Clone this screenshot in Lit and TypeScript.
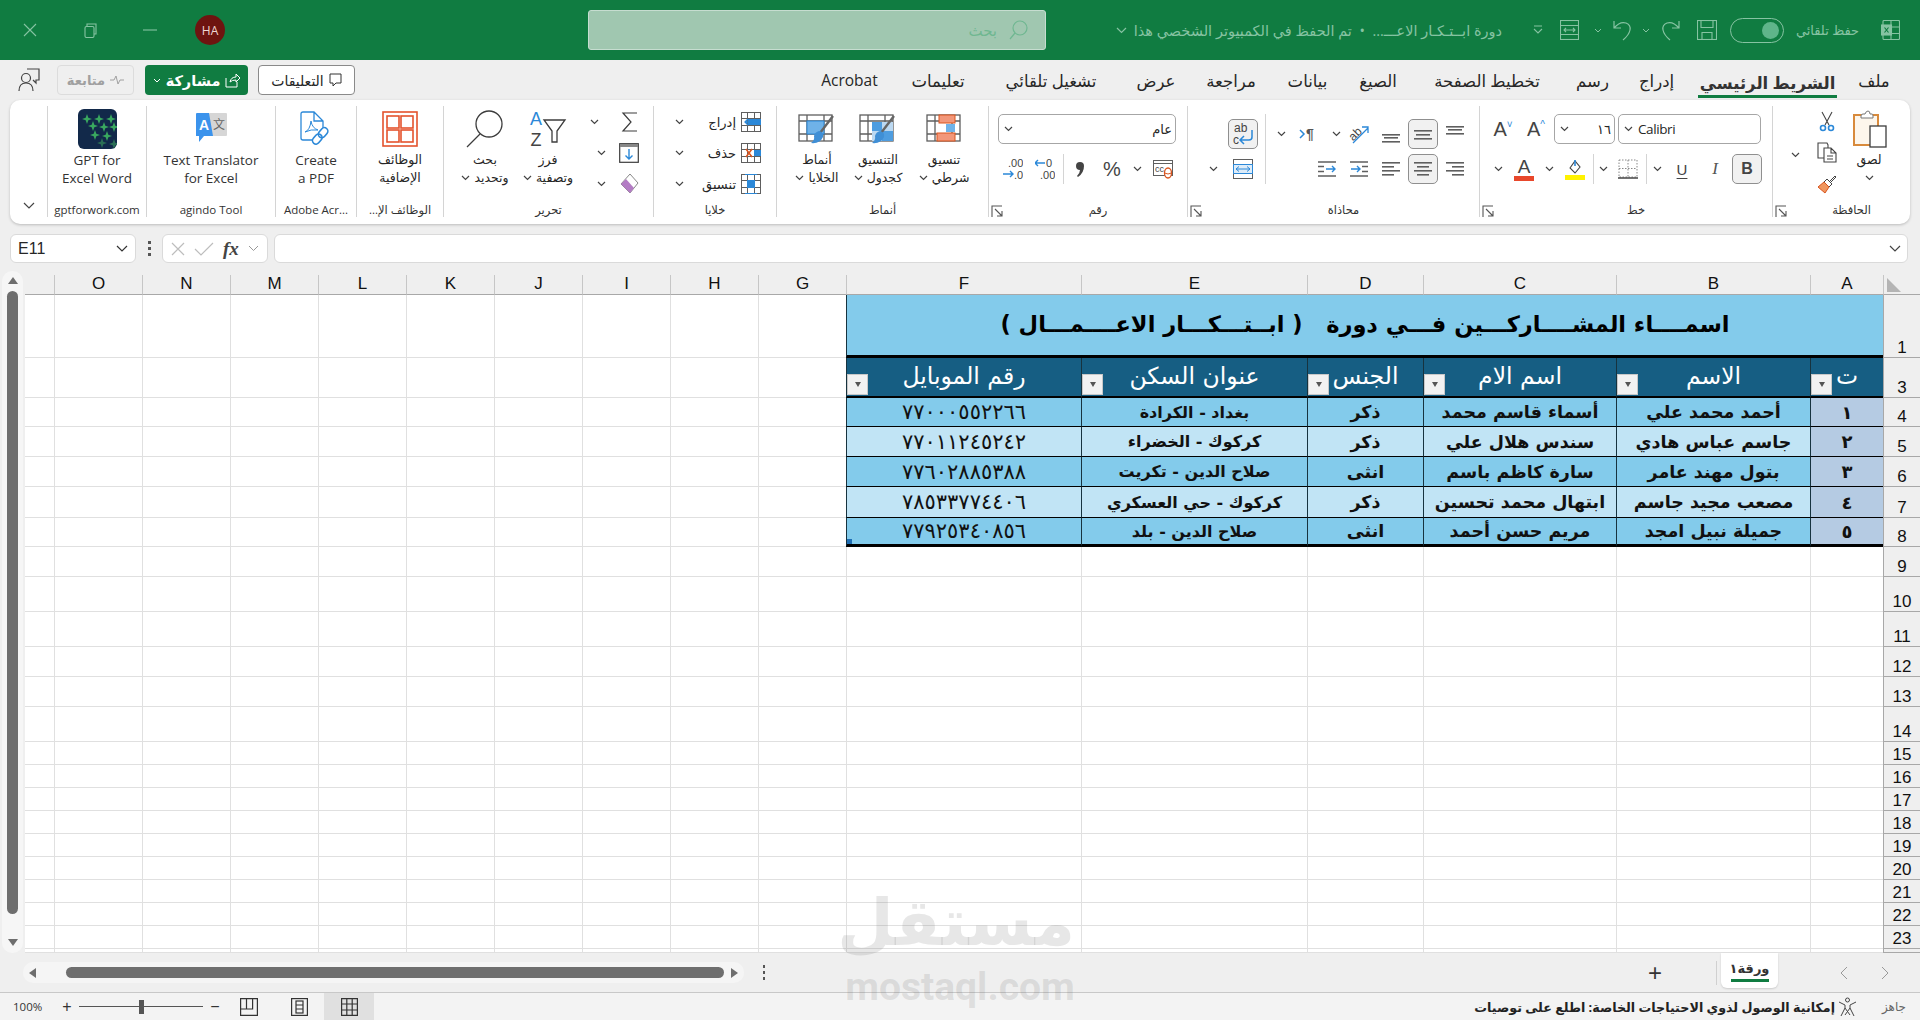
import {LitElement, html, svg, css} from 'lit';
import {customElement} from 'lit/decorators.js';

const G = '#5f5f5f';
const D = '#3c3c3c';
const B = '#2b88d8';
const O = '#d9541e';

const chev = html`<svg width="9" height="6" viewBox="0 0 9 6"><path d="M1 1l3.5 3.5L8 1" fill="none" stroke="#444" stroke-width="1.2"/></svg>`;
const launcher = html`<svg width="12" height="12" viewBox="0 0 12 12"><path d="M1 12V1h10M4 4l7 7M11 6v5H6" fill="none" stroke="#555" stroke-width="1.1"/></svg>`;

const lines = (rows: number[][], w = 20) => html`<svg width="${w}" height="18" viewBox="0 0 ${w} 18">${rows.map(r => svg`<rect x="${r[0]}" y="${r[1]}" width="${r[2]}" height="1.6" fill="${G}"/>`)}</svg>`;

// four pointed stars of the GPT add-in logo
const STAR_POS = [[9, 10], [21, 10], [33, 10], [15, 17], [26, 18], [36, 18], [17, 26], [29, 27], [24, 34], [36, 35]];
const stars = STAR_POS.map(([x, y], i) => svg`<path d="M${x} ${y - 5}l1.300 3.700 3.700 1.300-3.700 1.300-1.300 3.700-1.300-3.700-3.700-1.300 3.700-1.300z" fill="${i > 7 ? '#2b6f55' : '#39a85f'}"/>`);
const gptIcon = html`<svg width="39" height="40" viewBox="0 0 39 40"><rect width="39" height="40" rx="6" fill="#12294a"/>${stars}</svg>`;

const translateIcon = html`<svg width="32" height="33" viewBox="0 0 32 33"><rect x="14" y="1" width="18" height="23" rx="1" fill="#d6d6d6"/><path d="M1 2q0-1 1-1h12l4 23H9l-5 6v-6H1z" fill="#3b93ec"/><text x="9" y="18" text-anchor="middle" font-family="Liberation Sans" font-weight="700" font-size="14" fill="#fff">A</text><text x="24" y="17" text-anchor="middle" font-family="Noto Sans CJK SC" font-size="12" fill="#666">文</text></svg>`;

const pdfIcon = html`<svg width="32" height="36" viewBox="0 0 32 36"><path d="M1 3q0-2 2-2h11l9 9v7M14 1v9h9M1 3v24q0 2 2 2h10" fill="none" stroke="#2b88d8" stroke-width="1.300"/><path d="M5 21q5-2 6-11 1 7 7 9-7-1-13 2z" fill="none" stroke="#2b88d8" stroke-width="1"/><g fill="none" stroke="#2b88d8" stroke-width="1.600"><rect x="20" y="16" width="7" height="11" rx="3.500" transform="rotate(40 23 21)"/><rect x="14" y="23" width="7" height="11" rx="3.500" transform="rotate(40 18 28)"/></g></svg>`;

const addinIcon = html`<svg width="36" height="36" viewBox="0 0 36 36" fill="none" stroke="#e4532d" stroke-width="1.6"><rect x="1" y="1" width="34" height="34"/><rect x="5" y="5" width="12" height="12"/><rect x="19" y="5" width="12" height="12"/><rect x="5" y="19" width="12" height="12"/><rect x="19" y="19" width="12" height="12"/></svg>`;

const findIcon = html`<svg width="38" height="38" viewBox="0 0 38 38" fill="none" stroke="${D}" stroke-width="1.3"><circle cx="23" cy="14" r="13"/><path d="M14 24L1 37"/></svg>`;

const sortIcon = html`<svg width="38" height="38" viewBox="0 0 38 38"><text x="7" y="15" text-anchor="middle" font-family="Liberation Sans" font-size="18" fill="${B}">A</text><text x="7" y="36" text-anchor="middle" font-family="Liberation Sans" font-size="18" fill="#444">Z</text><path d="M15 10h21l-8 11v11h-5V21z" fill="none" stroke="${D}" stroke-width="1.3"/></svg>`;

const sumIcon = html`<svg width="18" height="20" viewBox="0 0 18 20"><path d="M16 1H2l8 9-8 9h14" fill="none" stroke="${D}" stroke-width="1.2"/></svg>`;
const fillDown = html`<svg width="20" height="20" viewBox="0 0 20 20"><rect x=".7" y=".7" width="18.6" height="18.6" fill="none" stroke="${D}" stroke-width="1.2"/><path d="M1 1h18v3H1z" fill="#888"/><path d="M10 6v10M6.5 12.5L10 16l3.5-3.5" fill="none" stroke="${B}" stroke-width="1.4"/></svg>`;
const eraser = html`<svg width="20" height="22" viewBox="0 0 20 22"><path d="M11 1l8 9-8 10-9-9z" fill="#fff" stroke="#888"/><path d="M2 11l5-5 8 9-4 5z" fill="#b37cc4"/></svg>`;

const sheetCell = (mark: any) => html`<svg width="20" height="20" viewBox="0 0 20 20"><g fill="none" stroke="${G}" stroke-width="1"><rect x=".5" y=".5" width="19" height="19"/><path d="M.5 6.5h19M.5 13.5h19M6.5.5v19M13.5.5v19"/></g>${mark}</svg>`;
const insIcon = sheetCell(svg`<rect x="7" y="7" width="13" height="6" fill="${B}"/><path d="M12 10H4M7 7l-3 3 3 3" fill="none" stroke="${B}" stroke-width="1.3"/>`);
const delIcon = sheetCell(svg`<rect x="13" y="7" width="7" height="6" fill="${B}"/><path d="M5 6l6 8M11 6l-6 8" stroke="${O}" stroke-width="1.5"/>`);
const fmtIcon = sheetCell(svg`<rect x="6" y="6" width="8" height="8" fill="${B}"/><path d="M4 .5h12M4 19.5h12" stroke="${B}" stroke-width="1"/>`);

const brush = svg`<path d="M35 2L22 19" stroke="#666" stroke-width="2.4"/><path d="M21 17q5 1 4 6-3 7-12 6 4-3 3-7 1-4 5-5z" fill="#3f8fd6"/>`;
const bigGrid = svg`<g fill="none" stroke="${G}" stroke-width="1.3"><rect x="1" y="1" width="33" height="26"/><path d="M1 7h33M1 20h33M9 1v26M26 1v26"/></g>`;
const cellStyle = html`<svg width="38" height="30" viewBox="0 0 38 30">${bigGrid}<rect x="9" y="7" width="17" height="13" fill="#6fb2e8" stroke="${B}"/>${brush}</svg>`;
const tableFmt = html`<svg width="38" height="30" viewBox="0 0 38 30">${bigGrid}<rect x="13" y="8" width="21" height="19" fill="#bcd9f2"/><rect x="13" y="8" width="10" height="9" fill="#4e9de0"/><rect x="23" y="17" width="11" height="10" fill="#4e9de0"/>${brush}</svg>`;
const condFmt = html`<svg width="36" height="30" viewBox="0 0 36 30">${bigGrid}<rect x="13" y="1" width="16" height="8" fill="#f2977a" stroke="${O}"/><rect x="20" y="10" width="9" height="8" fill="#6fb2e8"/><rect x="11" y="19" width="18" height="8" fill="#f2977a" stroke="${O}"/></svg>`;

const pasteIcon = html`<svg width="36" height="38" viewBox="0 0 36 38"><path d="M3 5h24v30H3z" fill="#fdf6ec" stroke="#d88a3c" stroke-width="2"/><path d="M10 6q0-2 2-2h2q1-3 3-3t2 3h2q1 0 1 2v2H10z" fill="#fff" stroke="#777"/><rect x="19" y="16" width="16" height="21" fill="#fff" stroke="${D}" stroke-width="1.3"/></svg>`;
const cutIcon = html`<svg width="16" height="21" viewBox="0 0 16 21"><path d="M3 1l7 13M13 1L6 14" fill="none" stroke="#444" stroke-width="1.1"/><circle cx="4" cy="17" r="2.5" fill="none" stroke="${B}" stroke-width="1.6"/><circle cx="12" cy="17" r="2.5" fill="none" stroke="${B}" stroke-width="1.6"/></svg>`;
const copyIcon = html`<svg width="20" height="21" viewBox="0 0 20 21" fill="#fff" stroke="#444" stroke-width="1.1"><path d="M1 1h9l1 2v13H1z"/><path d="M7 6h7l5 5v9H7zM14 6v5h5M10 14h6M10 17h6"/></svg>`;
const painterIcon = html`<svg width="20" height="20" viewBox="0 0 20 20"><path d="M12 8l6-6 1 1-6 6z" fill="none" stroke="#444"/><path d="M10 5l5 5-3 3-5-5z" fill="#fff" stroke="#444"/><path d="M7 8l5 5-4 6-7-6z" fill="#f0975f" stroke="${O}"/></svg>`;

const fontUp = html`<span class="fa">A<sup>^</sup></span>`;
const fontDown = html`<span class="fa">A<sup class="bl">˅</sup></span>`;
const fontColor = html`<span class="sw"><i>A</i><b class="red"></b></span>`;
const fillColor = html`<span class="sw"><svg width="18" height="15" viewBox="0 0 18 15"><path d="M4 9l5-7 5 6-5 6z" fill="none" stroke="#444" stroke-width="1.1"/><path d="M9 1v6" stroke="${B}" stroke-width="1.6"/></svg><b class="yel"></b></span>`;
const bordersIcon = html`<svg width="20" height="20" viewBox="0 0 20 20"><path d="M1 1h18v17H1zM10 1v17M1 9.5h18" fill="none" stroke="#888" stroke-width="1" stroke-dasharray="1.5 1.5"/><path d="M0 19h20" stroke="#444" stroke-width="1.5"/></svg>`;
const wrapIcon = html`<svg width="22" height="24" viewBox="0 0 22 24"><text x="2" y="10" font-family="Liberation Sans" font-size="12" fill="#444">ab</text><text x="1" y="22" font-family="Liberation Sans" font-size="12" fill="#444">c</text><path d="M20 8v7q0 3-3 3H9M12 14l-4 4 4 4" fill="none" stroke="${B}" stroke-width="1.5"/></svg>`;
const mergeIcon = html`<svg width="20" height="20" viewBox="0 0 20 20"><rect x=".5" y=".5" width="19" height="19" fill="#fff" stroke="${G}"/><path d="M.5 5.5h19v9H.5z" fill="#ddecf9" stroke="${B}"/><path d="M3 10h14M6 7.5L3 10l3 2.500M14 7.500l3 2.500-3 2.500" fill="none" stroke="${B}"/></svg>`;
const orientIcon = html`<svg width="22" height="22" viewBox="0 0 22 22"><text x="0" y="14" transform="rotate(-45 8 10)" font-family="Liberation Sans" font-size="12" fill="#444">ab</text><path d="M5 20L20 5M14 4h6v6" fill="none" stroke="${B}" stroke-width="1.3"/></svg>`;
const paraIcon = html`<svg width="20" height="14" viewBox="0 0 20 14"><path d="M1 3l4 4-4 4" fill="none" stroke="${B}" stroke-width="1.5"/><text x="7" y="12" font-family="Liberation Sans" font-weight="700" font-size="14" fill="#555">¶</text></svg>`;
const indentIcon = (flip: boolean) => html`<svg width="18" height="18" viewBox="0 0 18 18"><path d="M0 2h18M0 16h18M${flip ? '0 6.500h6M0 11.500h6' : '12 6.500h6M12 11.500h6'}" stroke="${G}" stroke-width="1.6"/><path d="M${flip ? '8 9h9M14 6l3 3-3 3' : '1 9h9M7 6l3 3-3 3'}" fill="none" stroke="${B}" stroke-width="1.400"/></svg>`;
const moneyIcon = html`<svg width="20" height="20" viewBox="0 0 20 20"><rect x=".5" y="1.500" width="19" height="15" fill="none" stroke="${G}"/><path d="M.5 4.500h19" stroke="${G}"/><text x="2" y="13" font-family="Liberation Sans" font-size="9" fill="#444">cc</text><ellipse cx="15" cy="14" rx="3.500" ry="5" fill="#fff" stroke="${O}" stroke-width="1.300"/><path d="M11.500 14q3.500 2 7 0" fill="none" stroke="${O}"/></svg>`;
const decIcon = (inc: boolean) => html`<svg width="20" height="24" viewBox="0 0 20 24"><text x="${inc ? 5 : 11}" y="10" font-family="Liberation Sans" font-size="11" fill="#444">${inc ? '.00' : '0'}</text><text x="${inc ? 11 : 5}" y="22" font-family="Liberation Sans" font-size="11" fill="#444">${inc ? '.0' : '.00'}</text><path d="${inc ? 'M0 17h10M7 14l3 3-3 3' : 'M10 6H0M3 3L0 6l3 3'}" fill="none" stroke="${B}" stroke-width="1.400"/></svg>`;
const commaIcon = html`<svg width="10" height="17" viewBox="0 0 10 17"><path d="M5 1a4 4 0 0 1 4 4q0 7-6 11l-1-1q3-3 3-6a4 4 0 0 1 0-8z" fill="#444"/></svg>`;

const dim = '#86c3a2';
const tbChev = html`<svg width="8" height="5" viewBox="0 0 8 5"><path d="M1 1l3 3 3-3" fill="none" stroke="${dim}"/></svg>`;
const tbIcons = {
  close: html`<svg width="14" height="14" viewBox="0 0 14 14"><path d="M1 1l12 12M13 1L1 13" stroke="${dim}" stroke-width="1.1"/></svg>`,
  restore: html`<svg width="13" height="15" viewBox="0 0 13 15" fill="none" stroke="${dim}" stroke-width="1.100"><path d="M3 3V1h9v10h-2"/><rect x="1" y="3.500" width="9" height="11" rx="1.500"/></svg>`,
  min: html`<svg width="14" height="2" viewBox="0 0 14 2"><path d="M0 1h14" stroke="${dim}" stroke-width="1.100"/></svg>`,
  custom: html`<svg width="10" height="10" viewBox="0 0 10 10" fill="none" stroke="${dim}" stroke-width="1.100"><path d="M1 1h8M1 4l4 4 4-4"/></svg>`,
  table: html`<svg width="19" height="20" viewBox="0 0 19 20" fill="none" stroke="${dim}" stroke-width="1.100"><rect x=".5" y=".5" width="18" height="19"/><path d="M.5 5.500h18M.5 14.500h18M4 10h11M6 8l-2 2 2 2M13 8l2 2-2 2"/></svg>`,
  undo: html`<svg width="19" height="21" viewBox="0 0 19 21" fill="none" stroke="${dim}" stroke-width="1.200"><path d="M1 1v7h7M1 8q6-7 12-5 5 2 4 7-1 5-7 10"/></svg>`,
  redo: html`<svg width="19" height="21" viewBox="0 0 19 21" fill="none" stroke="${dim}" stroke-width="1.200"><path d="M18 1v7h-7M18 8q-6-7-12-5-5 2-4 7 1 5 7 10"/></svg>`,
  save: html`<svg width="20" height="20" viewBox="0 0 20 20" fill="none" stroke="${dim}" stroke-width="1.100"><rect x=".5" y=".5" width="19" height="19"/><path d="M4 .5v7h12v-7M5 19.500v-7h10v7"/></svg>`,
  excel: html`<svg width="19" height="20" viewBox="0 0 19 20" fill="none" stroke="${dim}" stroke-width="1.100"><rect x="2" y=".5" width="16.500" height="19" rx="1"/><path d="M10 .5v19M2 7h16.500M2 13.500h16.500"/><rect x=".5" y="5" width="10" height="10" fill="${dim}"/><path d="M3.500 7.500l4 5M7.500 7.500l-4 5" stroke="#107c41" stroke-width="1.200"/></svg>`,
  search: html`<svg width="19" height="20" viewBox="0 0 19 20" fill="none" stroke="#6fb791" stroke-width="1.200"><circle cx="11" cy="8" r="7"/><path d="M6 13l-5 6"/></svg>`,
};

const COLS = ['', 'O', 'N', 'M', 'L', 'K', 'J', 'I', 'H', 'G', 'F', 'E', 'D', 'C', 'B', 'A'];
const ROW_NUMS = [1, 3, 4, 5, 6, 7, 8, 9, 10, 11, 12, 13, 14, 15, 16, 17, 18, 19, 20, 21, 22, 23];
const HEADERS = ['رقم الموبايل', 'عنوان السكن', 'الجنس', 'اسم الام', 'الاسم', 'ت'];
const PEOPLE = [
  ['٧٧٠٠٠٥٥٢٢٦٦', 'بغداد - الكرادة', 'ذكر', 'أسماء قاسم محمد', 'أحمد محمد علي', '١'],
  ['٧٧٠١١٢٤٥٢٤٢', 'كركوك - الخضراء', 'ذكر', 'سندس هلال علي', 'جاسم عباس هادي', '٢'],
  ['٧٧٦٠٢٨٨٥٣٨٨', 'صلاح الدين - تكريت', 'انثى', 'سارة كاظم باسم', 'بتول مهند عامر', '٣'],
  ['٧٨٥٣٣٧٧٤٤٠٦', 'كركوك - حي العسكري', 'ذكر', 'ابتهال محمد تحسين', 'مصعب مجيد جاسم', '٤'],
  ['٧٧٩٢٥٣٤٠٨٥٦', 'صلاح الدين - بلد', 'انثى', 'مريم حسن أحمد', 'جميلة نبيل امجد', '٥'],
];
const TABS = ['Acrobat', 'تعليمات', 'تشغيل تلقائي', 'عرض', 'مراجعة', 'بيانات', 'الصيغ', 'تخطيط الصفحة', 'رسم', 'إدراج', 'الشريط الرئيسي', 'ملف'];

@customElement('app-root')
export class AppRoot extends LitElement {
  static styles = css`
    :host {
      display: block;
      width: 1920px;
      height: 1020px;
      position: relative;
      overflow: hidden;
      background: #efefef;
      font-family: "Open Sans", "DejaVu Sans", sans-serif;
      color: #262626;
    }
    .ar { direction: rtl; }
    svg { display: block; flex: none; }
    .c { display: flex; align-items: center; justify-content: center; min-width: 0; }

    /* title bar */
    .title {
      height: 60px;
      background: #107c41;
      display: grid;
      grid-template-columns: 60px 60px 60px 60px 348px 458px 47px 409px 23px 26px 37px 20px 28px 20px 28px 46px 55px 85px 40px 10px;
      align-items: center;
      color: #86c3a2;
    }
    .avatar {
      width: 30px; height: 30px; border-radius: 50%;
      background: #6e1410; color: #f0d8d4;
      font-size: 12px; display: flex; align-items: center; justify-content: center;
    }
    .search {
      height: 40px; box-sizing: border-box;
      background: #a0c7b0; border: 1px solid #c6ddd0; border-radius: 3px;
      display: flex; align-items: center; justify-content: flex-end; gap: 12px;
      padding-right: 17px; color: #6fb791; font-size: 15px;
    }
    .doc { font-size: 14.5px; display: flex; align-items: center; justify-content: flex-end; gap: 7px; white-space: nowrap; overflow: hidden; }
    .toggle {
      width: 54px; height: 25px; box-sizing: border-box;
      border: 1px solid #86c3a2; border-radius: 13px;
      display: flex; align-items: center; justify-content: flex-end; padding-right: 4px;
    }
    .toggle i { width: 17px; height: 17px; border-radius: 50%; background: #5fb58a; }
    .autosave { font-size: 13px; white-space: nowrap; }

    /* tab row */
    .tabrow { height: 40px; display: flex; align-items: center; }
    .lefttools { width: 800px; display: flex; align-items: center; padding-left: 18px; box-sizing: border-box; }
    .pill {
      height: 30px; box-sizing: border-box; border-radius: 4px;
      display: flex; align-items: center; justify-content: center; gap: 5px; white-space: nowrap;
    }
    .follow { width: 77px; margin-left: 17px; border: 1px solid #dcdcdc; color: #a0a0a0; font-size: 13px; font-weight: 700; }
    .share { width: 103px; margin-left: 11px; background: #107c41; color: #fff; font-weight: 700; font-size: 14.5px; }
    .comments { width: 97px; margin-left: 10px; background: #fff; border: 1px solid #8a8a8a; font-size: 14px; }
    .tabs {
      width: 1112px; display: grid; height: 40px; align-items: center; justify-items: center;
      grid-template-columns: 99px 78px 148px 62px 88px 65px 76px 142px 69px 59px 163px 50px;
      font-size: 16.5px; white-space: nowrap;
    }
    .tabs .on {
      font-weight: 700; color: #333; font-size: 16.5px; padding: 3px 2px 1px;
      border-bottom: 3px solid #107c41; margin-top: 5px;
    }
    .tabs .latin { font-size: 15.5px; }

    /* ribbon */
    .ribbon {
      height: 124px; margin: 0 10px; box-sizing: border-box;
      background: #fff; border-radius: 10px;
      box-shadow: 0 1px 3px rgba(0,0,0,.22);
      display: grid;
      grid-template-columns: 37px 99px 129px 81px 87px 210px 123px 212px 199px 292px 293px 138px;
      padding: 6px 0 7px;
    }
    .collapse { display: flex; align-items: flex-end; justify-content: center; padding-bottom: 8px; }
    .grp { border-left: 1px solid #d4d4d4; display: flex; flex-direction: column; height: 111px; min-width: 0; }
    .body { height: 97px; display: flex; min-width: 0; }
    .bodystyles { padding-left: 8px; }
    .lab {
      height: 14px; font-size: 11.5px; line-height: 14px; color: #333; text-align: center;
      display: flex; white-space: nowrap;
    }
    .lab span { flex: 1; text-align: center; }
    .lab .l { width: 20px; flex: none; padding-left: 2px; padding-top: 2px; box-sizing: border-box; }
    .big { display: flex; flex-direction: column; align-items: center; min-width: 0; flex: 1; font-size: 12.5px; line-height: 18px; white-space: nowrap; }
    .big .ic { height: 45px; flex: none; display: flex; align-items: center; justify-content: center; }
    .big.en { font-size: 13.5px; color: #333; }
    .big .ln { display: flex; gap: 4px; align-items: center; justify-content: center; height: 18px; }
    .w82 { flex: none; width: 82px; }
    .w44 { flex: none; width: 44px; }
    .w64 { flex: none; width: 64px; }
    .w58 { flex: none; width: 58px; }
    .w74 { flex: none; width: 74px; }
    .w68 { flex: none; width: 68px; }
    .tri { display: grid; grid-template-rows: 31px 31px 31px; align-items: center; flex: none; }
    .editTri { width: 84px; }
    .editTri > div { display: flex; align-items: center; justify-content: flex-end; padding-right: 15px; gap: 13px; }
    .editTri .far { margin-right: 9px; }
    .cellsTri { width: 123px; font-size: 13px; }
    .cellsTri > div { display: grid; grid-template-columns: 16px 18px 51px 24px; align-items: center; justify-items: center; }
    .cellsTri span { justify-self: end; padding-right: 3px; white-space: nowrap; }
    .clipChev { width: 44px; align-self: center; display: flex; justify-content: center; }
    .clipTri { width: 18px; justify-items: center; }
    .stack { display: flex; flex-direction: column; gap: 10px; padding-top: 8px; width: 100%; }
    .r { display: grid; height: 30px; align-items: center; justify-items: center; }
    .btn { width: 30px; height: 30px; box-sizing: border-box; display: flex; align-items: center; justify-content: center; }
    .sel { background: #f1f1f1; border: 1px solid #8f8f8f; border-radius: 5px; }
    .sep { width: 1px; height: 30px; background: #d4d4d4; }
    .sep.tall { height: 40px; align-self: start; }
    .field {
      height: 30px; box-sizing: border-box; width: 100%;
      border: 1px solid #a6a6a6; border-radius: 5px; background: #fff;
      display: flex; align-items: center; gap: 5px; padding: 0 3px 0 5px; font-size: 13px;
    }
    .field .v { flex: 1; }
    .cal { font-family: "Open Sans", sans-serif; font-size: 13.5px; letter-spacing: -.4px; }
    .fa { font-family: "Liberation Sans", sans-serif; font-size: 20px; color: #444; position: relative; }
    .fa sup { font-size: 10px; color: #2b88d8; vertical-align: 8px; line-height: 0; }
    .sw { display: flex; flex-direction: column; align-items: center; width: 20px; }
    .sw i { font: normal 19px/17px "Liberation Sans", sans-serif; color: #444; }
    .sw b { width: 20px; height: 5px; display: block; margin-top: 1px; }
    .red { background: #e8472b; }
    .yel { background: #fff200; }
    .bi { font: 700 16px "Liberation Sans", sans-serif; color: #444; }
    .it { font: italic 17px "Liberation Serif", serif; color: #555; }
    .un { font: 15px "Liberation Sans", sans-serif; color: #444; text-decoration: underline; text-underline-offset: 3px; }
    .pct { font: 20px "Liberation Sans", sans-serif; color: #444; }
    .fontTop { grid-template-columns: 30px 30px 61px 143px; column-gap: 3px; padding-left: 8px; }
    .fontBot { grid-template-columns: 20px 32px 18px 34px 2px 18px 32px 4px 18px 32px 34px 30px; padding-left: 8px; }
    .alTop { grid-template-columns: 30px 14px 18px 37px 18px 28px 35px 30px 34px; padding-left: 40px; }
    .alBot { grid-template-columns: 18px 6px 30px 14px 37px 36px 28px 35px 30px 34px; padding-left: 16px; }
    .numTop { padding: 0 11px 0 9px; display: block; }
    .numBot { grid-template-columns: 30px 34px 2px 32px 32px 18px 34px; padding-left: 9px; }

    /* formula bar */
    .fbar { height: 51px; box-sizing: border-box; padding: 10px 12px 12px 10px; display: flex; align-items: stretch; }
    .fbox { background: #fff; border: 1px solid #dadada; border-radius: 6px; box-sizing: border-box; display: flex; align-items: center; }
    .namebox { width: 126px; padding: 0 7px 0 7px; justify-content: space-between; font: 16px "Liberation Sans", sans-serif; }
    .dots { width: 26px; display: flex; flex-direction: column; align-items: center; justify-content: center; gap: 3px; }
    .dots i { width: 3px; height: 3px; background: #555; }
    .fx { width: 106px; justify-content: space-around; padding: 0 4px; }
    .fx em { font: italic 700 19px "Liberation Serif", serif; color: #444; }
    .finput { flex: 1; margin-left: 6px; justify-content: flex-end; padding-right: 6px; }

    /* sheet */
    .sheet { height: 678px; display: flex; }
    .vs { width: 25px; box-sizing: border-box; padding: 0 2px 0 2px; display: flex; }
    .vtrack {
      flex: 1; background: #f6f6f6; border-radius: 10px; margin-top: -4px;
      display: flex; flex-direction: column; align-items: center;
    }
    .tup { width: 0; height: 0; border: 5px solid transparent; border-top: none; border-bottom: 7px solid #6e6e6e; margin-top: 6px; }
    .tdn { width: 0; height: 0; border: 5px solid transparent; border-bottom: none; border-top: 7px solid #6e6e6e; }
    .vthumb { width: 11px; height: 623px; background: #6e6e6e; border-radius: 6px; margin: 7px 0 25px; }

    .grid {
      flex: 1; display: grid; background: #fff;
      grid-template-columns: 29px repeat(9, 88px) 235px 226px 116px 193px 194px 73px 37px;
      grid-template-rows: 20px 63px 40px 29px 30px 30px 31px 29px 30px 35px 35px 30px 30px 35px repeat(9, 23px) 4px;
      font-family: "Liberation Sans", sans-serif;
    }
    .ch {
      background: #efefef; border-left: 1px solid #c6c6c6; border-bottom: 1px solid #a8a8a8;
      box-sizing: border-box; font-size: 17px; line-height: 18px; text-align: center; color: #111;
    }
    .ch.first { border-left: none; }
    .corner { background: #efefef; border-bottom: 1px solid #a8a8a8; border-left: 1px solid #c6c6c6; box-sizing: border-box; display: flex; align-items: center; padding-left: 3px; }
    .corner i { width: 0; height: 0; border-left: 0 solid transparent; border-right: 14px solid #b4b4b4; border-top: 14px solid transparent; transform: scaleX(-1); }
    .rh {
      background: #efefef; border-left: 1px solid #a8a8a8; border-bottom: 1px solid #a8a8a8;
      box-sizing: border-box; font-size: 17px; line-height: 19px;
      display: flex; align-items: flex-end; justify-content: center; color: #111;
    }
    .cell { border-left: 1px solid #e0e0e0; border-bottom: 1px solid #e0e0e0; box-sizing: border-box; }
    .cell.nol { border-left: none; }
    .tc {
      display: flex; align-items: center; justify-content: center; direction: rtl; white-space: nowrap;
      box-sizing: border-box; min-width: 0; position: relative;
      font-family: "DejaVu Sans", sans-serif; color: #111;
      border-left: 1px solid #17333f; border-bottom: 1px solid #000;
    }
    .titlecell {
      grid-column: 11 / 17; background: #83cbeb; font-weight: 700; font-size: 22.5px; color: #000;
      border-bottom: 3px solid #000; padding-bottom: 3px;
    }
    .hd { background: #165e83; color: #fff; font-size: 23.5px; border-bottom: 2px solid #000; padding-bottom: 2px; }
    .odd { background: #83cbeb; }
    .even { background: #c1e4f5; }
    .idx { background: #b5cbe3; font-size: 18px !important; }
    .dt { font-weight: 700; font-size: 17.5px; }
    .addr { font-size: 16px; }
    .num { font-size: 21px; font-weight: 400; letter-spacing: 0; }
    .last { border-bottom: 3px solid #000; }
    .flt {
      position: absolute; left: 0; bottom: 1px; width: 21px; height: 21px; box-sizing: border-box;
      background: #f2f2f2; border: 1px solid #c8c8c8; display: flex; align-items: center; justify-content: center;
    }
    .flt i { width: 0; height: 0; border: 3.5px solid transparent; border-bottom: none; border-top: 5px solid #555; }
    .handle { position: absolute; left: 0; bottom: 0; width: 5px; height: 5px; background: #1f6fb5; }

    /* sheet tabs */
    .strip { height: 40px; box-sizing: border-box; border-bottom: 1px solid #c8c8c8; display: flex; align-items: flex-start; }
    .hs {
      width: 721px; height: 21px; margin: 9px 0 0 23px; background: #f5f5f5; border-radius: 10px;
      display: flex; align-items: center; box-sizing: border-box; padding: 0 6px;
    }
    .hl { width: 0; height: 0; border: 5px solid transparent; border-left: none; border-right: 7px solid #6e6e6e; }
    .hr { width: 0; height: 0; border: 5px solid transparent; border-right: none; border-left: 7px solid #6e6e6e; }
    .hthumb { flex: 1; height: 11px; background: #6e6e6e; border-radius: 6px; margin: 0 7px 0 30px; }
    .vdots { height: 30px; flex-direction: column; gap: 3px; }
    .vdots i { width: 2px; height: 3px; background: #555; display: block; }
    .tabzone { flex: 1; display: grid; grid-template-columns: 40px 847px 48px 37px 5px 57px 46px 40px 42px; height: 100%; box-sizing: border-box; align-items: center; }
    .plus { font: 24px "Liberation Sans", sans-serif; color: #333; text-align: center; }
    .tabsep { width: 1px; height: 24px; background: #d0d0d0; }
    .sheettab {
      height: 35px; align-self: start; background: #fff; border-radius: 0 0 6px 6px;
      box-shadow: 0 1px 2px rgba(0,0,0,.15);
      display: flex; flex-direction: column; align-items: center; font: 700 13px "DejaVu Sans", sans-serif; color: #333;
      padding-top: 8px; box-sizing: border-box;
    }
    .sheettab i { width: 38px; height: 3px; background: #107c41; margin-top: 3px; display: block; }
    .nav { display: flex; justify-content: center; }

    /* status bar */
    .status {
      height: 27px; background: #f3f3f3; display: flex; align-items: center; font-size: 12px; color: #333;
    }
    .zoomlab { width: 58px; box-sizing: border-box; padding-left: 13px; font-size: 11.5px; }
    .zp { width: 18px; text-align: center; font: 16px "Liberation Sans", sans-serif; }
    .slider { width: 124px; height: 1px; background: #555; margin: 0 3px; display: flex; justify-content: center; align-items: center; }
    .slider i { width: 5px; height: 14px; background: #555; flex: none; }
    .view { display: flex; align-items: center; justify-content: center; height: 27px; width: 50px; }
    .view.on { background: #e0e0e0; }
    .acc { margin-left: auto; display: flex; align-items: center; gap: 3px; font-weight: 700; font-size: 12.7px; direction: rtl; white-space: nowrap; color: #222; }
    .ready { width: 63px; box-sizing: border-box; padding-right: 14px; direction: rtl; color: #666; font-size: 12px; flex: none; display: flex; justify-content: flex-start; }

    .wm { position: absolute; left: 845px; top: 877px; width: 230px; text-align: center; color: rgba(110,110,110,.17); pointer-events: none; }
    .wm b { display: block; font: 700 65px/92px "DejaVu Sans", sans-serif; direction: rtl; }
    .wm span { display: block; font: 700 39px/36px Roboto, sans-serif; white-space: nowrap; }
  `;

  renderTitle() {
    return html`<div class="title">
      <div class="c">${tbIcons.close}</div>
      <div class="c">${tbIcons.restore}</div>
      <div class="c">${tbIcons.min}</div>
      <div class="c"><div class="avatar">HA</div></div>
      <div></div>
      <div class="search"><span>بحث</span>${tbIcons.search}</div>
      <div></div>
      <div class="doc"><svg width="11" height="7" viewBox="0 0 11 7"><path d="M1 1l4.500 4.500L10 1" fill="none" stroke="#86c3a2" stroke-width="1.200"/></svg><span class="ar">دورة ابــتـكـار الاعـــ...&nbsp;&nbsp;•&nbsp;&nbsp;تم الحفظ في الكمبيوتر الشخصي هذا</span></div>
      <div></div>
      <div class="c">${tbIcons.custom}</div>
      <div class="c">${tbIcons.table}</div>
      <div class="c">${tbChev}</div>
      <div class="c">${tbIcons.undo}</div>
      <div class="c">${tbChev}</div>
      <div class="c">${tbIcons.redo}</div>
      <div class="c">${tbIcons.save}</div>
      <div class="toggle"><i></i></div>
      <div class="c autosave ar">حفظ تلقائي</div>
      <div class="c">${tbIcons.excel}</div>
      <div></div>
    </div>`;
  }

  renderTabs() {
    return html`<div class="tabrow">
      <div class="lefttools">
        <svg width="22" height="24" viewBox="0 0 22 24" fill="none" stroke="#444" stroke-width="1.200"><path d="M9 1h12v11h-3v3l-3-3"/><circle cx="8" cy="10" r="4.500" fill="#f0f0f0"/><path d="M1 23q0-8 7-8t7 8"/></svg>
        <div class="pill follow ar"><svg width="14" height="10" viewBox="0 0 14 10"><path d="M0 5h4l2-4 2 8 2-4h4" fill="none" stroke="#a0a0a0"/></svg><span>متابعة</span></div>
        <div class="pill share ar"><svg width="15" height="15" viewBox="0 0 15 15"><path d="M1 5v9h11V9M5 9q1-5 6-5V1l4 4-4 4V7q-4 0-6 2z" fill="none" stroke="#fff"/></svg><span>مشاركة</span><svg width="8" height="5" viewBox="0 0 8 5"><path d="M1 1l3 3 3-3" fill="none" stroke="#fff"/></svg></div>
        <div class="pill comments ar"><svg width="13" height="14" viewBox="0 0 13 14"><path d="M1 1h11v9H7l-3 3v-3H1z" fill="none" stroke="#333"/></svg><span>التعليقات</span></div>
      </div>
      <div class="tabs">
        ${TABS.map(t => html`<div class="${t === 'الشريط الرئيسي' ? 'on ar' : t === 'Acrobat' ? 'latin' : 'ar'}">${t}</div>`)}
      </div>
    </div>`;
  }

  big(icon: any, a: string, b: string, en = false, cls = '') {
    return html`<div class="big ${en ? 'en' : 'ar'} ${cls}">
      <div class="ic">${icon}</div>
      <div class="ln">${a}</div>
      <div class="ln">${b}${en ? '' : chev}</div>
    </div>`;
  }

  grpLabel(text: string, launch = false) {
    return html`<div class="lab">
      ${launch ? html`<div class="l">${launcher}</div>` : ''}
      <span class="ar">${text}</span>
    </div>`;
  }

  renderRibbon() {
    const al = (rows: number[][]) => lines(rows);
    return html`<div class="ribbon">
      <div class="collapse"><svg width="12" height="7" viewBox="0 0 12 7"><path d="M1 1l5 5 5-5" fill="none" stroke="#444" stroke-width="1.200"/></svg></div>

      <div class="grp"><div class="body">${this.big(gptIcon, 'GPT for', 'Excel Word', true)}</div><div class="lab"><span>gptforwork.com</span></div></div>
      <div class="grp"><div class="body">${this.big(translateIcon, 'Text Translator', 'for Excel', true)}</div><div class="lab"><span>agindo Tool</span></div></div>
      <div class="grp"><div class="body">${this.big(pdfIcon, 'Create', 'a PDF', true)}</div><div class="lab"><span>Adobe Acr...</span></div></div>
      <div class="grp"><div class="body"><div class="big ar"><div class="ic">${addinIcon}</div><div class="ln">الوظائف</div><div class="ln">الإضافية</div></div></div>${this.grpLabel('الوظائف الإ...')}</div>

      <div class="grp">
        <div class="body">
          ${this.big(findIcon, 'بحث', 'وتحديد', false, 'w82')}
          ${this.big(sortIcon, 'فرز', 'وتصفية', false, 'w44')}
          <div class="tri editTri">
            <div><span class="far">${chev}</span>${sumIcon}</div>
            <div>${chev}${fillDown}</div>
            <div>${chev}${eraser}</div>
          </div>
        </div>
        ${this.grpLabel('تحرير')}
      </div>

      <div class="grp">
        <div class="body">
          <div class="tri cellsTri">
            <div><i></i>${chev}<span class="ar">إدراج</span>${insIcon}</div>
            <div><i></i>${chev}<span class="ar">حذف</span>${delIcon}</div>
            <div><i></i>${chev}<span class="ar">تنسيق</span>${fmtIcon}</div>
          </div>
        </div>
        ${this.grpLabel('خلايا')}
      </div>

      <div class="grp">
        <div class="body bodystyles">
          ${this.big(cellStyle, 'أنماط', 'الخلايا', false, 'w64')}
          ${this.big(tableFmt, 'التنسيق', 'كجدول', false, 'w58')}
          ${this.big(condFmt, 'تنسيق', 'شرطي', false, 'w74')}
        </div>
        ${this.grpLabel('أنماط')}
      </div>

      <div class="grp">
        <div class="body">
          <div class="stack">
            <div class="r numTop"><div class="field">${chev}<span class="v ar">عام</span></div></div>
            <div class="r numBot">
              <div class="btn">${decIcon(true)}</div>
              <div class="btn">${decIcon(false)}</div>
              <div class="sep"></div>
              <div class="btn">${commaIcon}</div>
              <div class="btn pct">%</div>
              ${chev}
              <div class="btn">${moneyIcon}</div>
            </div>
          </div>
        </div>
        ${this.grpLabel('رقم', true)}
      </div>

      <div class="grp">
        <div class="body">
          <div class="stack">
            <div class="r alTop">
              <div class="btn sel">${wrapIcon}</div>
              <div class="sep tall"></div>
              ${chev}
              <div class="btn">${paraIcon}</div>
              ${chev}
              <div class="btn">${orientIcon}</div>
              <div class="btn">${al([[1, 9, 18], [3, 12, 14], [1, 16, 18]])}</div>
              <div class="btn sel">${al([[1, 5, 18], [3, 9, 14], [1, 13, 18]])}</div>
              <div class="btn">${al([[1, 1, 18], [3, 4, 14], [1, 8, 18]])}</div>
            </div>
            <div class="r alBot">
              ${chev}
              <i></i>
              <div class="btn">${mergeIcon}</div>
              <div class="sep"></div>
              <i></i>
              <div class="btn">${indentIcon(true)}</div>
              <div class="btn">${indentIcon(false)}</div>
              <div class="btn">${al([[1, 2, 18], [1, 6, 12], [1, 10, 18], [1, 14, 12]])}</div>
              <div class="btn sel">${al([[1, 2, 18], [4, 6, 12], [1, 10, 18], [4, 14, 12]])}</div>
              <div class="btn">${al([[1, 2, 18], [7, 6, 12], [1, 10, 18], [7, 14, 12]])}</div>
            </div>
          </div>
        </div>
        ${this.grpLabel('محاذاة', true)}
      </div>

      <div class="grp">
        <div class="body">
          <div class="stack">
            <div class="r fontTop">
              <div class="btn">${fontDown}</div>
              <div class="btn">${fontUp}</div>
              <div class="field">${chev}<span class="v ar">١٦</span></div>
              <div class="field">${chev}<span class="v cal">Calibri</span></div>
            </div>
            <div class="r fontBot">
              ${chev}
              <div class="btn">${fontColor}</div>
              ${chev}
              <div class="btn">${fillColor}</div>
              <div class="sep"></div>
              ${chev}
              <div class="btn">${bordersIcon}</div>
              <div class="sep"></div>
              ${chev}
              <div class="btn un">U</div>
              <div class="btn it">I</div>
              <div class="btn sel bi">B</div>
            </div>
          </div>
        </div>
        ${this.grpLabel('خط', true)}
      </div>

      <div class="grp">
        <div class="body">
          <div class="clipChev">${chev}</div>
          <div class="tri clipTri"><div>${cutIcon}</div><div>${copyIcon}</div><div>${painterIcon}</div></div>
          <div class="big ar w68"><div class="ic">${pasteIcon}</div><div class="ln">لصق</div><div class="ln">${chev}</div></div>
        </div>
        ${this.grpLabel('الحافظة', true)}
      </div>
    </div>`;
  }

  renderFormula() {
    return html`<div class="fbar">
      <div class="fbox namebox"><span>E11</span><svg width="12" height="7" viewBox="0 0 12 7"><path d="M1 1l5 5 5-5" fill="none" stroke="#333" stroke-width="1.200"/></svg></div>
      <div class="dots"><i></i><i></i><i></i></div>
      <div class="fbox fx">
        <svg width="14" height="14" viewBox="0 0 14 14"><path d="M1 1l12 12M13 1L1 13" stroke="#bdbdbd" stroke-width="1.200"/></svg>
        <svg width="20" height="14" viewBox="0 0 20 14"><path d="M1 7l6 6L19 1" fill="none" stroke="#bdbdbd" stroke-width="1.200"/></svg>
        <em>fx</em>
        <svg width="11" height="7" viewBox="0 0 11 7"><path d="M1 1l4.500 4.500L10 1" fill="none" stroke="#999"/></svg>
      </div>
      <div class="fbox finput"><svg width="12" height="7" viewBox="0 0 12 7"><path d="M1 1l5 5 5-5" fill="none" stroke="#444" stroke-width="1.200"/></svg></div>
    </div>`;
  }

  blanks(count: number) {
    return Array.from({length: count}, (_, i) => html`<div class="cell ${i === 0 ? 'nol' : ''}"></div>`);
  }

  renderRow(n: number) {
    const rh = html`<div class="rh">${n}</div>`;
    if (n === 1) {
      return html`${this.blanks(10)}<div class="tc titlecell">اسمــــاء المشــــاركـــين فـــي دورة&nbsp;&nbsp; ( ابــتـــكـــار الاعــــمـــال )</div>${rh}`;
    }
    if (n === 3) {
      return html`${this.blanks(10)}${HEADERS.map(h => html`<div class="tc hd">${h}<div class="flt"><i></i></div></div>`)}${rh}`;
    }
    if (n >= 4 && n <= 8) {
      const row = PEOPLE[n - 4];
      const band = n % 2 === 0 ? 'odd' : 'even';
      return html`${this.blanks(10)}${row.map((v, i) => html`<div class="tc dt ${i === 5 ? 'idx' : band} ${i === 0 ? 'num' : ''} ${i === 1 ? 'addr' : ''} ${n === 8 ? 'last' : ''}">${v}${n === 8 && i === 0 ? html`<span class="handle"></span>` : ''}</div>`)}${rh}`;
    }
    return html`${this.blanks(16)}${rh}`;
  }

  renderSheet() {
    return html`<div class="sheet">
      <div class="vs"><div class="vtrack"><i class="tup"></i><div class="vthumb"></div><i class="tdn"></i></div></div>
      <div class="grid">
        ${COLS.map((c, i) => html`<div class="ch ${i === 0 ? 'first' : ''}">${c}</div>`)}
        <div class="corner"><i></i></div>
        ${ROW_NUMS.map(n => this.renderRow(n))}
        ${this.blanks(16)}
        <div class="rh"></div>
      </div>
    </div>`;
  }

  renderStrip() {
    return html`<div class="strip">
      <div class="hs"><i class="hl"></i><div class="hthumb"></div><i class="hr"></i></div>
      <div class="tabzone">
        <div class="c vdots"><i></i><i></i><i></i></div>
        <div></div>
        <div class="plus">+</div>
        <div></div>
        <div class="tabsep"></div>
        <div class="sheettab ar"><span>ورقة١</span><i></i></div>
        <div></div>
        <div class="nav"><svg width="8" height="14" viewBox="0 0 8 14"><path d="M7 1L1 7l6 6" fill="none" stroke="#999"/></svg></div>
        <div class="nav"><svg width="8" height="14" viewBox="0 0 8 14"><path d="M1 1l6 6-6 6" fill="none" stroke="#999"/></svg></div>
      </div>
    </div>`;
  }

  renderStatus() {
    return html`<div class="status">
      <div class="zoomlab">100%</div>
      <div class="zp">+</div>
      <div class="slider"><i></i></div>
      <div class="zp">−</div>
      <div class="view"><svg width="18" height="18" viewBox="0 0 18 18" fill="none" stroke="#333" stroke-width="1.200"><path d="M.6.6h16.800v16.800H.6zM.6 11h12V.6M6.500.6V11"/></svg></div>
      <div class="view"><svg width="17" height="18" viewBox="0 0 17 18" fill="none" stroke="#333" stroke-width="1.200"><rect x=".6" y=".6" width="15.800" height="16.800"/><rect x="5" y="3" width="7" height="12"/><path d="M5 7h7M5 11h7"/></svg></div>
      <div class="view on"><svg width="17" height="18" viewBox="0 0 17 18" fill="none" stroke="#333" stroke-width="1.200"><path d="M.6.6h15.800v16.800H.6zM.6 6h15.800M.6 12h15.800M5.800.6v16.800M11.200.6v16.800"/></svg></div>
      <div class="acc"><svg width="19" height="20" viewBox="0 0 19 20" fill="none" stroke="#444"><circle cx="9.500" cy="3" r="2"/><path d="M1 5l6 3v3L3 19M18 5l-6 3v3l4 8M7 11l5 7M12 11l-5 7"/></svg><span>إمكانية الوصول لذوي الاحتياجات الخاصة: اطلع على توصيات</span></div>
      <div class="ready"><span>جاهز</span></div>
    </div>`;
  }

  render() {
    return html`
      ${this.renderTitle()}
      ${this.renderTabs()}
      ${this.renderRibbon()}
      ${this.renderFormula()}
      ${this.renderSheet()}
      ${this.renderStrip()}
      ${this.renderStatus()}
      <div class="wm"><b>مستقل</b><span>mostaql.com</span></div>
    `;
  }
}
